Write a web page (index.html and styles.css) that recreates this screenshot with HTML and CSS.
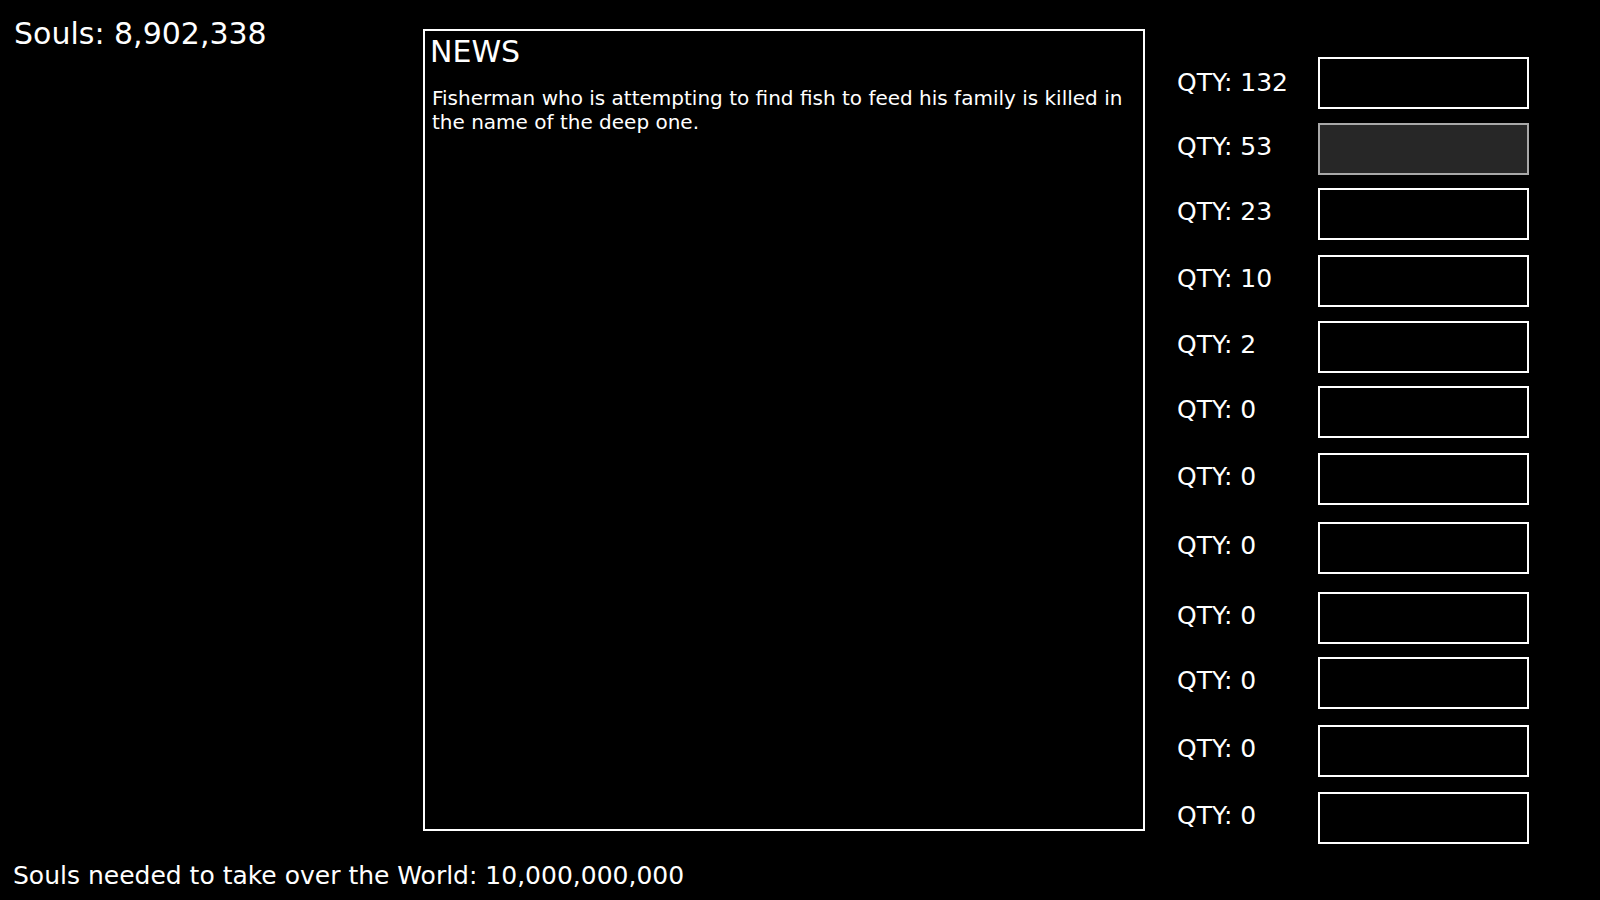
FILE: index.html
```html
<!DOCTYPE html>
<html lang="en">
<head>
<meta charset="utf-8">
<title>Souls</title>
<link rel="stylesheet" href="styles.css">
</head>
<body>
<div class="page">
  <div class="main">
    <div class="souls">Souls: 8,902,338</div>
    <section class="news">
      <h2 class="news-title">NEWS</h2>
      <p class="news-text">Fisherman who is attempting to find fish to feed his family is killed in the name of the deep one.</p>
    </section>
    <div class="shop">
      <div class="qty">QTY: 132</div><button class="buy"></button>
      <div class="qty">QTY: 53</div><button class="buy hover"></button>
      <div class="qty">QTY: 23</div><button class="buy"></button>
      <div class="qty">QTY: 10</div><button class="buy"></button>
      <div class="qty">QTY: 2</div><button class="buy"></button>
      <div class="qty">QTY: 0</div><button class="buy"></button>
      <div class="qty">QTY: 0</div><button class="buy"></button>
      <div class="qty">QTY: 0</div><button class="buy"></button>
      <div class="qty">QTY: 0</div><button class="buy"></button>
      <div class="qty">QTY: 0</div><button class="buy"></button>
      <div class="qty">QTY: 0</div><button class="buy"></button>
      <div class="qty">QTY: 0</div><button class="buy"></button>
    </div>
  </div>
  <div class="goal">Souls needed to take over the World: 10,000,000,000</div>
</div>
</body>
</html>
```

FILE: styles.css
```css
html, body {
  margin: 0;
  padding: 0;
  background: #000;
  color: #fff;
  font-family: "DejaVu Sans", "Liberation Sans", sans-serif;
}

.page {
  width: 1600px;
  height: 900px;
  overflow: hidden;
}

.main {
  display: grid;
  grid-template-columns: 423px 722px 1fr;
  align-items: start;
  height: 844px;
}

.souls {
  font-size: 30px;
  line-height: normal;
  padding: 16px 0 0 14px;
}

.news {
  box-sizing: border-box;
  margin-top: 29px;
  height: 802px;
  border: 2px solid #fff;
  padding: 3px 5px;
}

.news-title {
  margin: 0;
  font-size: 30px;
  font-weight: normal;
  line-height: normal;
}

.news-text {
  margin: 17px 0 0;
  padding-left: 2px;
  font-size: 20px;
  line-height: 24px;
}

.shop {
  margin: 57px 0 0 32px;
  display: grid;
  grid-template-columns: 141px 211px;
  grid-template-rows: 66px 65px 67px 66px 65px 67px 69px 70px 65px 68px 67px 52px;
  align-items: start;
}

.qty {
  font-size: 25px;
  line-height: 48px;
  white-space: nowrap;
}

.qty:first-child {
  line-height: 52px;
}

.buy {
  display: block;
  box-sizing: border-box;
  width: 211px;
  height: 52px;
  margin: 0;
  padding: 0;
  background: #000;
  border: 2px solid #fff;
  border-radius: 0;
  cursor: pointer;
}

.buy.hover {
  background: #272727;
  border-color: #a8a8a8;
}

.goal {
  margin-top: 17px;
  padding-left: 13px;
  font-size: 25px;
  line-height: normal;
  white-space: nowrap;
}
```
